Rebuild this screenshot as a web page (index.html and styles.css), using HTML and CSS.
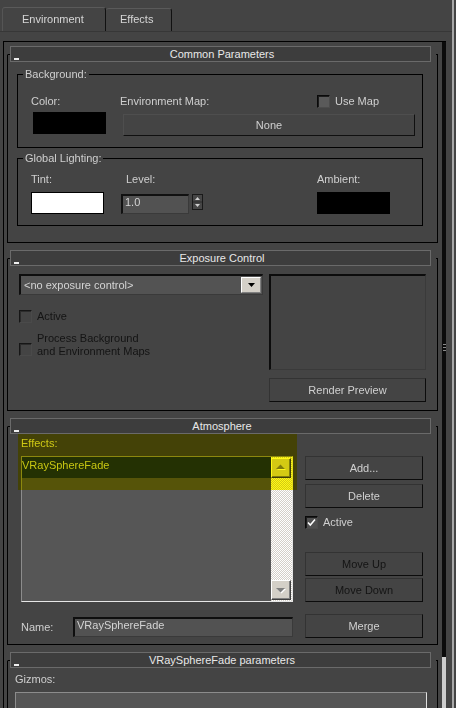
FILE: index.html
```html
<!DOCTYPE html>
<html>
<head>
<meta charset="utf-8">
<title>Environment and Effects</title>
<link rel="stylesheet" href="styles.css">
</head>
<body>
<div class="screen">
  <div class="left">
    <div class="tabbar">
      <div class="tab tab-env">Environment</div>
      <div class="tab tab-fx">Effects</div>
    </div>
    <div class="frame">
      <div class="content">

        <div class="rollout">
          <div class="rtitle"><span class="min"></span><span class="rname">Common Parameters</span><span></span></div>
          <div class="rbody rb-common">
            <div class="group">
              <div class="glabel">Background:</div>
              <div class="grow labels">
                <span class="c-color">Color:</span>
                <span class="c-envmap">Environment Map:</span>
                <span class="chk-row"><span class="chk"></span><span class="chk-text">Use Map</span></span>
              </div>
              <div class="grow ctrls ctrls-bg">
                <div class="swatch sw-black"></div>
                <div class="btn btn-none">None</div>
              </div>
            </div>
            <div class="group g-light">
              <div class="glabel">Global Lighting:</div>
              <div class="grow labels labels-light">
                <span class="c-tint">Tint:</span>
                <span class="c-level">Level:</span>
                <span>Ambient:</span>
              </div>
              <div class="grow ctrls ctrls-light">
                <div class="swatch sw-white"></div>
                <div class="spin-input">1.0</div>
                <svg class="spin-arrows" width="11" height="16" viewBox="0 0 11 16">
                  <rect x="0.5" y="0.5" width="10" height="15" fill="#464646" stroke="#1a1a1a"/>
                  <polygon points="5.5,3 8,6 3,6" fill="#cfcfcf"/>
                  <line x1="1" y1="8" x2="10" y2="8" stroke="#2a2a2a"/>
                  <polygon points="3,10 8,10 5.5,13" fill="#cfcfcf"/>
                </svg>
                <div class="swatch sw-black sw-amb"></div>
              </div>
            </div>
          </div>
        </div>

        <div class="rollout">
          <div class="rtitle"><span class="min"></span><span class="rname">Exposure Control</span><span></span></div>
          <div class="rbody rb-exposure">
            <div class="exp-left">
              <div class="dropdown">
                <span>&lt;no exposure control&gt;</span>
                <span class="dd-btn">
                  <svg width="7" height="4" viewBox="0 0 7 4"><polygon points="0,0 7,0 3.5,4" fill="#000"/></svg>
                </span>
              </div>
              <div class="chk-line exp-active">
                <span class="chk dis"></span><span class="dis-text">Active</span>
              </div>
              <div class="chk-line exp-process">
                <span class="chk dis chk-low"></span><span class="dis-text">Process Background<br>and Environment Maps</span>
              </div>
            </div>
            <div class="exp-right">
              <div class="preview"></div>
              <div class="btn btn-render">Render Preview</div>
            </div>
          </div>
        </div>

        <div class="rollout">
          <div class="rtitle"><span class="min"></span><span class="rname">Atmosphere</span><span></span></div>
          <div class="rbody rb-atmos">
            <div class="atm-left">
              <div class="lbl-effects">Effects:</div>
              <div class="list">
                <div class="list-items">
                  <div class="list-item">VRaySphereFade</div>
                </div>
                <div class="list-scroll">
                  <span class="sb-btn">
                    <svg width="18" height="18" viewBox="0 0 18 18"><polygon points="5,11 14,11 9.5,6.5" fill="#ffffff"/><polygon points="4,10 13,10 8.5,5.5" fill="#808080"/></svg>
                  </span>
                  <span class="sb-btn">
                    <svg width="18" height="18" viewBox="0 0 18 18"><polygon points="5,8 14,8 9.5,12.5" fill="#ffffff"/><polygon points="4,7 13,7 8.5,11.5" fill="#808080"/></svg>
                  </span>
                </div>
              </div>
              <div class="name-row">
                <span class="name-lbl">Name:</span>
                <div class="name-input">VRaySphereFade</div>
              </div>
            </div>
            <div class="atm-right">
              <div class="btn">Add...</div>
              <div class="btn btn-delete">Delete</div>
              <div class="chk-line atm-active">
                <span class="chk on"><svg width="11" height="11" viewBox="0 0 11 11"><polyline points="2,5.5 4.3,8 9,2.5" fill="none" stroke="#ffffff" stroke-width="1.5"/></svg></span><span>Active</span>
              </div>
              <div class="btn btn-dis btn-moveup">Move Up</div>
              <div class="btn btn-dis btn-movedown">Move Down</div>
              <div class="btn btn-merge">Merge</div>
            </div>
            <div class="highlight"></div>
          </div>
        </div>

        <div class="rollout">
          <div class="rtitle"><span class="min"></span><span class="rname">VRaySphereFade parameters</span><span></span></div>
          <div class="rbody rb-params">
            <div class="lbl-gizmos">Gizmos:</div>
            <div class="gizmo-box"></div>
          </div>
        </div>

      </div>
      <div class="vscroll">
        <div class="vs-track"><div class="grip"></div></div>
        <div class="vs-thumb"></div>
      </div>
    </div>
  </div>
  <div class="edge"></div>
  <div class="rest"></div>
</div>
</body>
</html>
```

FILE: styles.css
```css
* { box-sizing: border-box; }
html, body { margin: 0; padding: 0; }
body {
  background: #444444;
  width: 456px;
  height: 708px;
  overflow: hidden;
  font-family: "Liberation Sans", Arial, sans-serif;
  font-size: 11px;
  line-height: 13px;
  color: #cfcfcf;
}
.screen { display: flex; height: 708px; }
.left { width: 452px; height: 708px; display: flex; flex-direction: column; }
.edge { width: 2px; background: #a8a8a8; }
.rest { flex: 1; }

/* tabs */
.tabbar {
  height: 32px;
  padding: 0 0 0 2px;
  border-bottom: 1px solid #373737;
  display: flex;
  align-items: flex-end;
}
.tab {
  background: #444;
  border-top: 1px solid #5a5a5a;
  border-left: 1px solid #555;
  border-right: 1px solid #111;
  border-radius: 3px 3px 0 0;
  display: flex;
  align-items: center;
  color: #d6d6d6;
  font-size: 11px;
}
.tab-env { width: 104px; height: 24px; padding-left: 19px; }
.tab-fx { width: 66px; height: 23px; padding-left: 14px; padding-bottom: 1px; border-left: none; }

/* frame */
.frame {
  margin: 9px 0 0 3px;
  width: 443px;
  flex: 1;
  min-height: 0;
  border-top: 1px solid #000;
  border-left: 1px solid #000;
  display: flex;
  overflow: hidden;
}
.content { width: 438px; padding-top: 4px; overflow: hidden; }
.vscroll { width: 4px; display: flex; flex-direction: column; }
.vs-track { flex: 1; background: #0b0b0b; }
.grip {
  margin: 302px 0 0 1px;
  width: 3px;
  height: 8px;
  background: repeating-linear-gradient(#8a8a8a 0 1px, transparent 1px 3px);
}
.vs-thumb { height: 51px; background: #cdcdcd; }

/* rollouts */
.rollout { margin: 0 4px 0 3px; }
.rollout + .rollout { margin-top: 7px; }
.rtitle {
  position: relative;
  z-index: 1;
  margin: 0 7px -8px 3px;
  height: 16px;
  border: 1px solid #6a6a6a;
  background: #3d3d3d;
  display: grid;
  grid-template-columns: 1fr auto 1fr;
  align-items: center;
  padding: 0 0 0 3px;
  color: #e8e8e8;
  line-height: 14px;
}
.min {
  justify-self: start;
  width: 5px;
  height: 2px;
  margin-top: 9px;
  background: #eeeeee;
}
.rbody {
  border: 1px solid #000;
  border-top-color: transparent;
  background:
    linear-gradient(#000, #000) 0 0 / 3px 1px no-repeat,
    linear-gradient(#000, #000) 100% 0 / 2px 1px no-repeat;
  background-origin: border-box;
}

/* common parameters */
.rb-common { padding: 19px 0 16px 0; }
.group {
  margin: 0 14px 0 9px;
  border: 1px solid #000;
  display: flex;
  flex-direction: column;
}
.g-light { margin-top: 10px; }
.glabel {
  align-self: flex-start;
  margin: -7px 0 0 5px;
  padding: 0 2px;
  height: 13px;
  background: #444;
  color: #cfcfcf;
}
.grow { display: flex; }
.labels { height: 14px; margin-top: 13px; padding-left: 13px; align-items: center; }
.labels-light { margin-top: 7px; }
.c-color { width: 89px; }
.c-envmap { width: 197px; }
.c-tint { width: 95px; }
.c-level { width: 191px; }
.chk-row { display: flex; align-items: center; }
.chk-text { margin-left: 5px; }
.ctrls { align-items: flex-start; }
.ctrls-bg { margin-top: 4px; padding: 0 0 11px 15px; }
.ctrls-light { margin-top: 6px; padding: 0 0 11px 13px; }
.swatch { width: 73px; height: 22px; flex: none; }
.sw-black { background: #000; }
.sw-white { background: #fff; border: 1px solid #000; }
.sw-amb { margin-left: 114px; }
.btn {
  height: 24px;
  border: 1px solid;
  border-color: #333 #0c0c0c #0c0c0c #333;
  background: #444;
  display: flex;
  align-items: center;
  justify-content: center;
  color: #d0d0d0;
  flex: none;
}
.btn-none { width: 292px; height: 22px; margin: 2px 0 0 17px; border-color: #4e4e4e #101010 #101010 #4e4e4e; }
.spin-input {
  width: 68px;
  height: 20px;
  margin: 2px 0 0 17px;
  border-style: solid;
  border-width: 2px 1px 1px 2px;
  border-color: #111 #3a3a3a #3a3a3a #111;
  background: #525252;
  padding-left: 2px;
  color: #d4d4d4;
  flex: none;
}
.spin-arrows { margin: 2px 0 0 3px; flex: none; display: block; }

/* checkboxes */
.chk {
  width: 13px;
  height: 13px;
  flex: none;
  border: 1px solid;
  border-color: #0a0a0a #4c4c4c #4c4c4c #0a0a0a;
  box-shadow: inset 1px 1px #1c1c1c;
  background: #5a5a5a;
  display: flex;
  align-items: center;
  justify-content: center;
}
.chk.dis {
  background: #444;
  border-color: #161616 #4a4a4a #4a4a4a #161616;
  box-shadow: inset 1px 1px #2c2c2c;
}
.chk.on { background: #505050; }
.chk.on svg { display: block; }
.chk-line { display: flex; align-items: center; }
.chk-line > .chk + span { margin-left: 5px; }
.dis-text { color: #141414; }

/* exposure */
.rb-exposure { display: flex; padding: 15px 0 8px 11px; }
.exp-left { width: 244px; }
.dropdown {
  height: 21px;
  border-style: solid;
  border-width: 2px 1px 1px 2px;
  border-color: #0e0e0e #3a3a3a #3a3a3a #0e0e0e;
  background: #535353;
  display: flex;
  align-items: center;
  justify-content: space-between;
  padding: 0 1px 0 3px;
  color: #d4d4d4;
}
.dd-btn {
  width: 20px;
  height: 16px;
  background: #d4d0c8;
  border: 1px solid;
  border-color: #fff #808080 #808080 #fff;
  display: flex;
  align-items: center;
  justify-content: center;
}
.dd-btn svg { display: block; }
.exp-active { margin-top: 15px; height: 13px; }
.exp-process { margin-top: 9px; align-items: flex-start; }
.chk-low { margin-top: 11px; }
.exp-right { width: 157px; margin-left: 6px; }
.preview {
  height: 96px;
  border-style: solid;
  border-width: 2px 1px 1px 2px;
  border-color: #0c0c0c #3a3a3a #3a3a3a #0c0c0c;
  background: #444;
}
.btn-render { margin-top: 8px; }

/* atmosphere */
.rb-atmos { position: relative; display: flex; padding: 0 0 6px 13px; }
.atm-left { width: 272px; padding-top: 10px; }
.lbl-effects { height: 13px; }
.list {
  margin-top: 6px;
  height: 146px;
  border: 1px solid;
  border-color: #8c8c8c #e6e6e6 #e6e6e6 #8c8c8c;
  background: #565656;
  display: flex;
}
.list-items { flex: 1; }
.list-item {
  height: 21px;
  padding-top: 2px;
  background: rgb(36, 50, 30);
  color: #c8ccb0;
}
.list-scroll {
  width: 21px;
  padding: 1px 1px 1px 0;
  display: flex;
  flex-direction: column;
  justify-content: space-between;
  background-color: #ffffff;
  background-image: conic-gradient(#d4d0c8 25%, transparent 0 50%, #d4d0c8 0 75%, transparent 0);
  background-size: 2px 2px;
}
.sb-btn {
  width: 20px;
  height: 20px;
  background: #d4d0c8;
  border: 1px solid;
  border-color: #fff #404040 #404040 #fff;
  box-shadow: inset -1px -1px #808080;
  display: block;
}
.sb-btn svg { display: block; }
.name-row { margin-top: 15px; height: 20px; display: flex; align-items: center; }
.name-lbl { width: 52px; }
.name-input {
  width: 220px;
  height: 20px;
  border-style: solid;
  border-width: 2px 1px 1px 2px;
  border-color: #0e0e0e #3a3a3a #3a3a3a #0e0e0e;
  background: #525252;
  padding-left: 2px;
  color: #d4d4d4;
}
.atm-right { width: 118px; margin-left: 12px; padding-top: 29px; }
.btn-delete { margin-top: 4px; }
.atm-active { margin-top: 8px; height: 13px; }
.btn-moveup { margin-top: 23px; }
.btn-movedown { margin-top: 2px; }
.btn-merge { margin-top: 12px; }
.btn-dis { color: #141414; }
.highlight {
  position: absolute;
  left: 10px;
  top: 5px;
  width: 279px;
  height: 58px;
  background: rgb(255, 248, 24);
  mix-blend-mode: multiply;
  pointer-events: none;
}

/* params */
.rb-params { padding: 12px 10px 0 7px; height: 200px; }
.lbl-gizmos { height: 13px; }
.gizmo-box {
  margin-top: 6px;
  width: 412px;
  height: 120px;
  border: 1px solid;
  border-color: #8c8c8c #e0e0e0 #e0e0e0 #8c8c8c;
  background: #555;
}
```
